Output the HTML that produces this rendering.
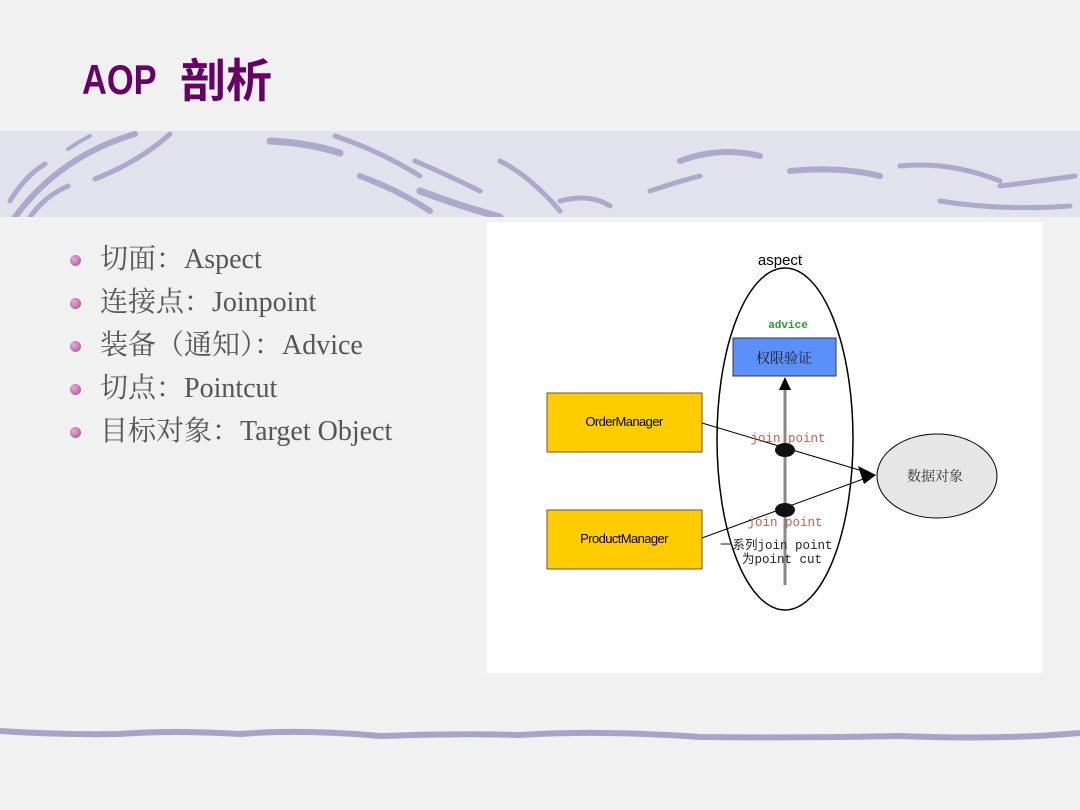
<!DOCTYPE html>
<html><head><meta charset="utf-8"><style>
html,body{margin:0;padding:0}
body{width:1080px;height:810px;position:relative;overflow:hidden;background:#f1f1f1;font-family:"Liberation Serif","Noto Serif CJK SC",serif}
.t1{position:absolute;left:82px;top:56px;font:bold 42px "Liberation Sans",sans-serif;color:#660066;transform:scaleX(0.82);transform-origin:left}
.t2{position:absolute;left:180px;top:48px;font:bold 46px "Noto Sans CJK SC",sans-serif;color:#660066;line-height:60px}
.band{position:absolute;left:0;top:131px;width:1080px;height:86px;background:#e2e2ec}
ul{position:absolute;left:70px;top:238px;margin:0;padding:0;list-style:none}
li{height:43px;line-height:43px;font-size:28px;color:#555;position:relative;padding-left:30px}
li:before{content:"";position:absolute;left:0;top:17px;width:11px;height:11px;border-radius:50%;background:radial-gradient(circle at 35% 35%,#e9a9d9,#a0508a)}
.img{position:absolute;left:487px;top:222px;width:556px;height:451px;background:#fff}
</style></head><body>
<div class="t1">AOP</div><div class="t2">剖析</div>
<div class="band"></div>
<svg style="position:absolute;left:0;top:131px" width="1080" height="86" fill="none" stroke="#aaaacb" stroke-linecap="round">
<path d="M10 70 Q25 45 45 33" stroke-width="5"/>
<path d="M15 86 Q60 25 135 3" stroke-width="6"/>
<path d="M30 86 Q45 65 68 55" stroke-width="5"/>
<path d="M68 18 Q80 10 90 5" stroke-width="4"/>
<path d="M95 48 Q140 30 170 3" stroke-width="5"/>
<path d="M270 10 Q310 12 340 22" stroke-width="7"/>
<path d="M335 5 Q380 20 420 45" stroke-width="5"/>
<path d="M360 45 Q400 60 430 80" stroke-width="6"/>
<path d="M415 30 Q450 45 480 60" stroke-width="5"/>
<path d="M420 60 Q460 75 500 86" stroke-width="7"/>
<path d="M500 30 Q530 45 560 80" stroke-width="5"/>
<path d="M560 70 Q590 62 610 75" stroke-width="5"/>
<path d="M650 60 Q680 50 700 45" stroke-width="5"/>
<path d="M680 30 Q720 15 760 25" stroke-width="6"/>
<path d="M790 40 Q840 35 880 45" stroke-width="6"/>
<path d="M900 35 Q950 30 1000 50" stroke-width="5"/>
<path d="M1000 55 Q1040 50 1075 45" stroke-width="5"/>
<path d="M940 70 Q1000 80 1070 75" stroke-width="5"/>
</svg>
<ul>
<li>切面：Aspect</li>
<li>连接点：Joinpoint</li>
<li>装备（通知）：Advice</li>
<li>切点：Pointcut</li>
<li>目标对象：Target Object</li>
</ul>
<div class="img"></div>
<svg style="position:absolute;left:0;top:0" width="1080" height="810">
<ellipse cx="785" cy="439" rx="68" ry="171" fill="none" stroke="#000" stroke-width="1.5"/>
<text x="780" y="265" font-family="Liberation Sans" font-size="15" text-anchor="middle">aspect</text>
<text x="788" y="328" font-family="Liberation Mono" font-size="11" fill="#2a9a2a" font-weight="bold" text-anchor="middle">advice</text>
<rect x="733" y="338" width="103" height="38" fill="#5b8ff9" stroke="#335"/>
<text x="784" y="363" font-family="Noto Serif CJK SC" font-size="14" fill="#222" text-anchor="middle">权限验证</text>
<rect x="547" y="393" width="155" height="59" fill="#ffcc00" stroke="#654"/>
<text x="624" y="426" font-family="Liberation Sans" font-size="13" text-anchor="middle" letter-spacing="-0.6">OrderManager</text>
<rect x="547" y="510" width="155" height="59" fill="#ffcc00" stroke="#654"/>
<text x="624" y="543" font-family="Liberation Sans" font-size="13" text-anchor="middle" letter-spacing="-0.6">ProductManager</text>
<line x1="785" y1="585" x2="785" y2="388" stroke="#888" stroke-width="3"/>
<polygon points="785,377 779,390 791,390" fill="#000"/>
<ellipse cx="937" cy="476" rx="60" ry="42" fill="#e6e6e6" stroke="#000"/>
<text x="935" y="481" font-family="Noto Serif CJK SC" font-size="14" fill="#333" text-anchor="middle">数据对象</text>
<line x1="702" y1="423" x2="866" y2="472" stroke="#000"/>
<line x1="702" y1="538" x2="866" y2="478" stroke="#000"/>
<polygon points="876,475 858,466 862,478" fill="#000"/>
<polygon points="876,475 860,472 864,484" fill="#000"/>
<ellipse cx="785" cy="450" rx="10" ry="7" fill="#111"/>
<ellipse cx="785" cy="510" rx="10" ry="7" fill="#111"/>
<text x="788" y="442" font-family="Liberation Mono" font-size="12.5" fill="#c06050" text-anchor="middle">join point</text>
<text x="785" y="526" font-family="Liberation Mono" font-size="12.5" fill="#c06050" text-anchor="middle">join point</text>
<text x="720" y="549" font-family="Liberation Mono,Noto Sans CJK SC" font-size="12.5" fill="#222">一系列join point</text>
<text x="742" y="563" font-family="Liberation Mono,Noto Sans CJK SC" font-size="12.5" fill="#222">为point cut</text>
<path d="M0 731 Q60 735 120 734 Q170 730 240 734 Q300 729 380 736 Q450 733 520 735 Q600 730 700 737 Q800 738 900 736 Q1000 740 1080 733" stroke="#a5a5c8" stroke-width="6" fill="none"/>
</svg>
</body></html>
